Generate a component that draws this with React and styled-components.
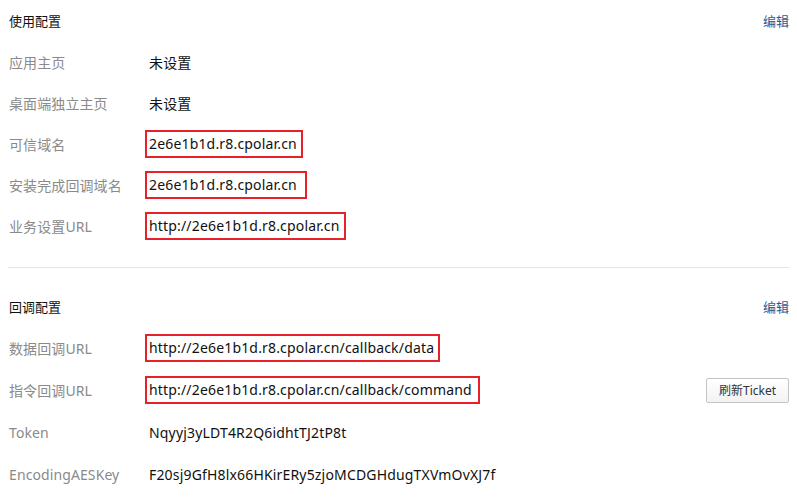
import React from "react";
import styled, { createGlobalStyle } from "styled-components";

const GlobalStyle = createGlobalStyle`
  html, body {
    margin: 0;
    padding: 0;
    background: #fff;
  }
  body {
    font-family: "Noto Sans", "Noto Sans CJK SC", sans-serif;
    color: #222;
  }
`;

const basic = [
  { label: "应用主页", value: "未设置" },
  { label: "桌面端独立主页", value: "未设置" },
  { label: "可信域名", value: "2e6e1b1d.r8.cpolar.cn", mark: 4 },
  { label: "安装完成回调域名", value: "2e6e1b1d.r8.cpolar.cn", mark: 8 },
  { label: "业务设置URL", value: "http://2e6e1b1d.r8.cpolar.cn", mark: 4 },
];

const callback = [
  { label: "数据回调URL", value: "http://2e6e1b1d.r8.cpolar.cn/callback/data", mark: 4 },
  { label: "指令回调URL", value: "http://2e6e1b1d.r8.cpolar.cn/callback/command", mark: 6, action: "刷新Ticket" },
  { label: "Token", value: "Nqyyj3yLDT4R2Q6idhtTJ2tP8t" },
  { label: "EncodingAESKey", value: "F20sj9GfH8lx66HKirERy5zjoMCDGHdugTXVmOvXJ7f" },
];

function ConfigRow({ row, height }) {
  return (
    <Row $h={height}>
      <Label>{row.label}</Label>
      {row.mark ? <Marked $pr={row.mark}>{row.value}</Marked> : <Value>{row.value}</Value>}
      {row.action && <Button>{row.action}</Button>}
    </Row>
  );
}

export default function App() {
  return (
    <>
      <GlobalStyle />
      <Page>
        <Section>
          <Header>
            <Title>使用配置</Title>
            <EditLink>编辑</EditLink>
          </Header>
          {basic.map((r) => (
            <ConfigRow key={r.label} row={r} height={41} />
          ))}
        </Section>
        <Divider />
        <Section>
          <Header>
            <Title>回调配置</Title>
            <EditLink>编辑</EditLink>
          </Header>
          {callback.map((r) => (
            <ConfigRow key={r.label} row={r} height={42} />
          ))}
        </Section>
      </Page>
    </>
  );
}

const Page = styled.div`
  width: 797px;
  padding: 0 8px 0 9px;
  box-sizing: border-box;
`;

const Section = styled.section`
  display: flex;
  flex-direction: column;
`;

const Header = styled.div`
  display: flex;
  justify-content: space-between;
  align-items: center;
  height: 41px;
`;

const Title = styled.h3`
  margin: 0;
  font-size: 13px;
  font-weight: normal;
  color: #111;
`;

const EditLink = styled.a`
  font-size: 13px;
  color: #1f5a96;
  cursor: pointer;
`;

const Row = styled.div`
  display: flex;
  align-items: center;
  height: ${(p) => p.$h}px;
`;

const Label = styled.div`
  width: 140px;
  flex-shrink: 0;
  font-size: 14px;
  color: #8a8a8a;
  letter-spacing: 0.1px;
`;

const Value = styled.div`
  font-size: 14px;
  color: #111;
  letter-spacing: 0.17px;
`;

const Marked = styled(Value)`
  margin-left: -4px;
  padding: 2px ${(p) => p.$pr}px 2px 2px;
  border: 2px solid #e8202a;
  line-height: 20px;
`;

const Divider = styled.hr`
  margin: 21px 0 18px -1px;
  border: none;
  border-top: 1px solid #e6e6e6;
`;

const Button = styled.button`
  margin-left: auto;
  width: 83px;
  height: 25px;
  padding: 0;
  font-family: inherit;
  font-size: 12px;
  color: #333;
  background: linear-gradient(#fff, #f3f3f3);
  border: 1px solid #c4c4c4;
  border-radius: 2px;
`;
